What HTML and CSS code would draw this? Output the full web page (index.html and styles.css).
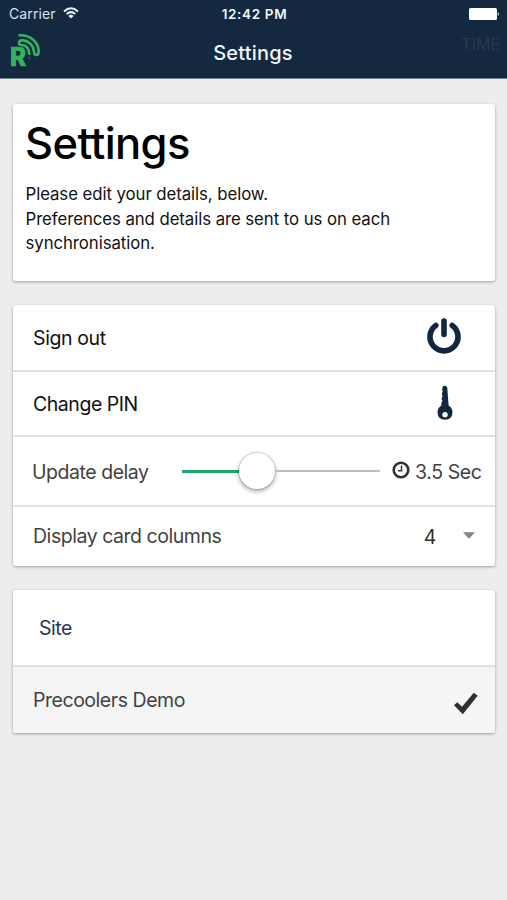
FILE: index.html
```html
<!DOCTYPE html>
<html lang="en">
<head>
<meta charset="utf-8">
<title>Settings</title>
<link rel="stylesheet" href="styles.css">
</head>
<body>
<header class="header">
  <div class="status">
    <div class="carrier"><span class="carrier-name">Carrier</span>
      <svg class="wifi" viewBox="0 0 16 12" fill="none" stroke="#e6f1fb" stroke-width="2"><path d="M1 4.4Q8-1.9 15 4.4M3.6 7.1Q8 3.1 12.4 7.1"/><path d="M5.4 8.9Q8 6.8 10.6 8.9L8 11.6Z" fill="#e6f1fb" stroke="none"/></svg>
    </div>
    <span class="clock">12:42 PM</span>
    <svg class="battery" viewBox="0 0 31 12" fill="#fff"><rect width="28" height="12" rx="1.5"/><path d="M28.8 4Q31 6 28.8 8Z"/></svg>
  </div>
  <div class="navbar">
    <div class="logo">
      <span class="logo-letter">R</span>
      <svg class="waves" viewBox="0 0 31 35" fill="none" stroke="#34b262"><path d="M8.5 2.4C20 1.4 29.3 9 28.6 19.5C28.1 23 24.4 22.4 24.1 19.5C23.5 11.5 17.5 6.8 11.5 7.4C8 8 8.3 11.8 11.5 12C16.5 12.2 19.2 15.5 19.3 22" stroke-width="2.6"/><circle cx="19.3" cy="25" r=".9" stroke-width=".8" opacity=".5"/></svg>
    </div>
    <span class="title">Settings</span>
    <span class="time">TIME</span>
  </div>
</header>
<main class="content">
  <section class="card intro">
    <h1 class="heading">Settings</h1>
    <p class="desc">Please edit your details, below.<br>Preferences and details are sent to us on each<br>synchronisation.</p>
  </section>
  <section class="card">
    <div class="row sign"><span class="label">Sign out</span>
      <svg class="power" viewBox="0 0 36 38" fill="none" stroke="#12263d" stroke-width="5.6" stroke-linecap="round"><path d="M9.8 8.5A14 14 0 1 0 26.2 8.5M18 4V17.5"/></svg>
    </div>
    <div class="row pin"><span class="label">Change PIN</span>
      <svg class="key" viewBox="0 0 16 36" fill="#12263d"><path fill-rule="evenodd" d="M5.3 3Q5.5.8 7.8.8Q10 .8 10.3 3L11.6 20.4Q15.5 22.7 15.5 27.4Q15 34.5 8 34.8Q.8 34.5.5 27.5Q.5 23 4.3 20.5L4.6 17L5.6 15.8L4.8 14.5V12.5L5.7 11.4L5 10V8L5.8 6.8L5.2 5.5ZM8 27A2.7 2.7 0 1 0 8 32.4A2.7 2.7 0 1 0 8 27Z"/></svg>
    </div>
    <div class="row delay"><span class="label">Update delay</span>
      <div class="slider"><div class="fill"></div><div class="knob"></div><div class="rest"></div></div>
      <svg class="timer" viewBox="0 0 18 18" fill="none" stroke="#303030"><circle cx="9" cy="9" r="7.3" stroke-width="2.6"/><path d="M9.5 4.5V9.7H6" stroke-width="1.5"/></svg>
      <span class="seconds">3.5 Sec</span>
    </div>
    <div class="row columns"><span class="label">Display card columns</span><span class="count">4</span>
      <svg class="caret" viewBox="0 0 12 7" fill="#858585"><path d="M0 .3H12L6 6.7Z"/></svg>
    </div>
  </section>
  <section class="card">
    <div class="row site"><span class="label">Site</span></div>
    <div class="row demo"><span class="label">Precoolers Demo</span>
      <svg class="check" viewBox="0 0 24 23" fill="#303030"><path d="M0 13.2L3.3 10.2L8 14.8L19.8.8L23.7 3.8L8.8 22.2Z"/></svg>
    </div>
  </section>
</main>
</body>
</html>
```

FILE: styles.css
```css
* { box-sizing: border-box; }
body { margin: 0; height: 900px; overflow: hidden; background: #ededed; font-family: Inter, "Liberation Sans", sans-serif; color: #000; }
svg { display: block; flex: none; }
span { white-space: nowrap; }
.header { height: 79px; background: #14283f; border-bottom: 1px solid #75818e; color: #f0f7ff; }
.status { height: 28px; display: grid; grid-template-columns: 1fr auto 1fr; align-items: center; padding: 0 7px 0 9px; font-size: 13px; }
.carrier { display: flex; align-items: center; gap: 7px; margin-top: -2px; color: #d5e2ef; font-size: 14px; letter-spacing: .1px; }
.wifi { width: 16px; height: 12px; }
.clock { font-size: 13.5px; font-weight: 600; letter-spacing: .65px; }
.battery { width: 31px; height: 12px; justify-self: end; margin-top: -1px; }
.navbar { height: 50px; display: grid; grid-template-columns: 1fr auto 1fr; padding: 0 7px 0 6px; }
.logo { position: relative; width: 31px; height: 35px; margin: 5px 0 0 4px; }
.logo-letter { position: absolute; left: 0; top: 10px; font: 900 25px/29px Roboto, sans-serif; color: #34b262; -webkit-text-stroke: .7px #34b262; }
.waves { width: 31px; height: 35px; }
.title { font-size: 20px; font-weight: 500; line-height: 50px; letter-spacing: .2px; }
.time { justify-self: end; font-size: 16px; line-height: 32px; color: #2b3745; }
.content { padding: 25px 12px 0 13px; }
.card { background: #fff; border-radius: 3px; box-shadow: 0 1px 3px rgba(0,0,0,.35); margin-bottom: 24px; overflow: hidden; }
.intro { height: 177px; padding: 13px 12px; }
.heading { margin: 0; font-size: 43.5px; line-height: 52px; font-weight: 500; letter-spacing: -.6px; }
.desc { margin: 13px 0 0; padding-left: .5px; font-size: 16.8px; line-height: 24.5px; letter-spacing: -.07px; color: #111; }
.row { display: flex; align-items: center; padding-left: 20px; font-size: 19.5px; letter-spacing: -.46px; color: #424242; border-bottom: 2px solid #e1e1e1; }
.row:last-child { border-bottom: 0; }
.sign { height: 67px; color: #111; }
.pin { height: 65px; color: #111; }
.sign .label, .pin .label { padding-top: 1px; }
.sign .label { letter-spacing: -.38px; }
.delay { height: 70px; padding-left: 19px; }
.delay .label, .seconds { padding-top: 2px; }
.columns { height: 59px; }
.columns .label { margin-top: -1px; }
.power { width: 36px; height: 38px; margin: -3px 33px 0 auto; }
.key { width: 16px; height: 36px; margin: -2px 42px 0 auto; }
.slider { width: 198px; display: flex; align-items: center; margin-left: auto; }
.fill { width: 57px; height: 3px; background: #1ba66d; }
.knob { width: 36px; height: 36px; border-radius: 50%; background: #fff; box-shadow: 0 2px 5px rgba(0,0,0,.38), 0 0 1px 1px rgba(0,0,0,.12); }
.rest { flex: 1; height: 2px; background: #bdbdbd; }
.timer { width: 18px; height: 18px; margin: -2px 5px 0 12px; }
.seconds { width: 67px; margin-right: 13px; letter-spacing: -.4px; }
.count { margin-left: auto; color: #303030; }
.caret { width: 12px; height: 7px; margin: -2px 20px 0 27px; }
.site { height: 77px; padding-left: 26px; color: #253950; }
.demo { height: 66px; background: #f5f5f5; }
.check { width: 24px; height: 23px; margin: 7px 17px 0 auto; }
```
